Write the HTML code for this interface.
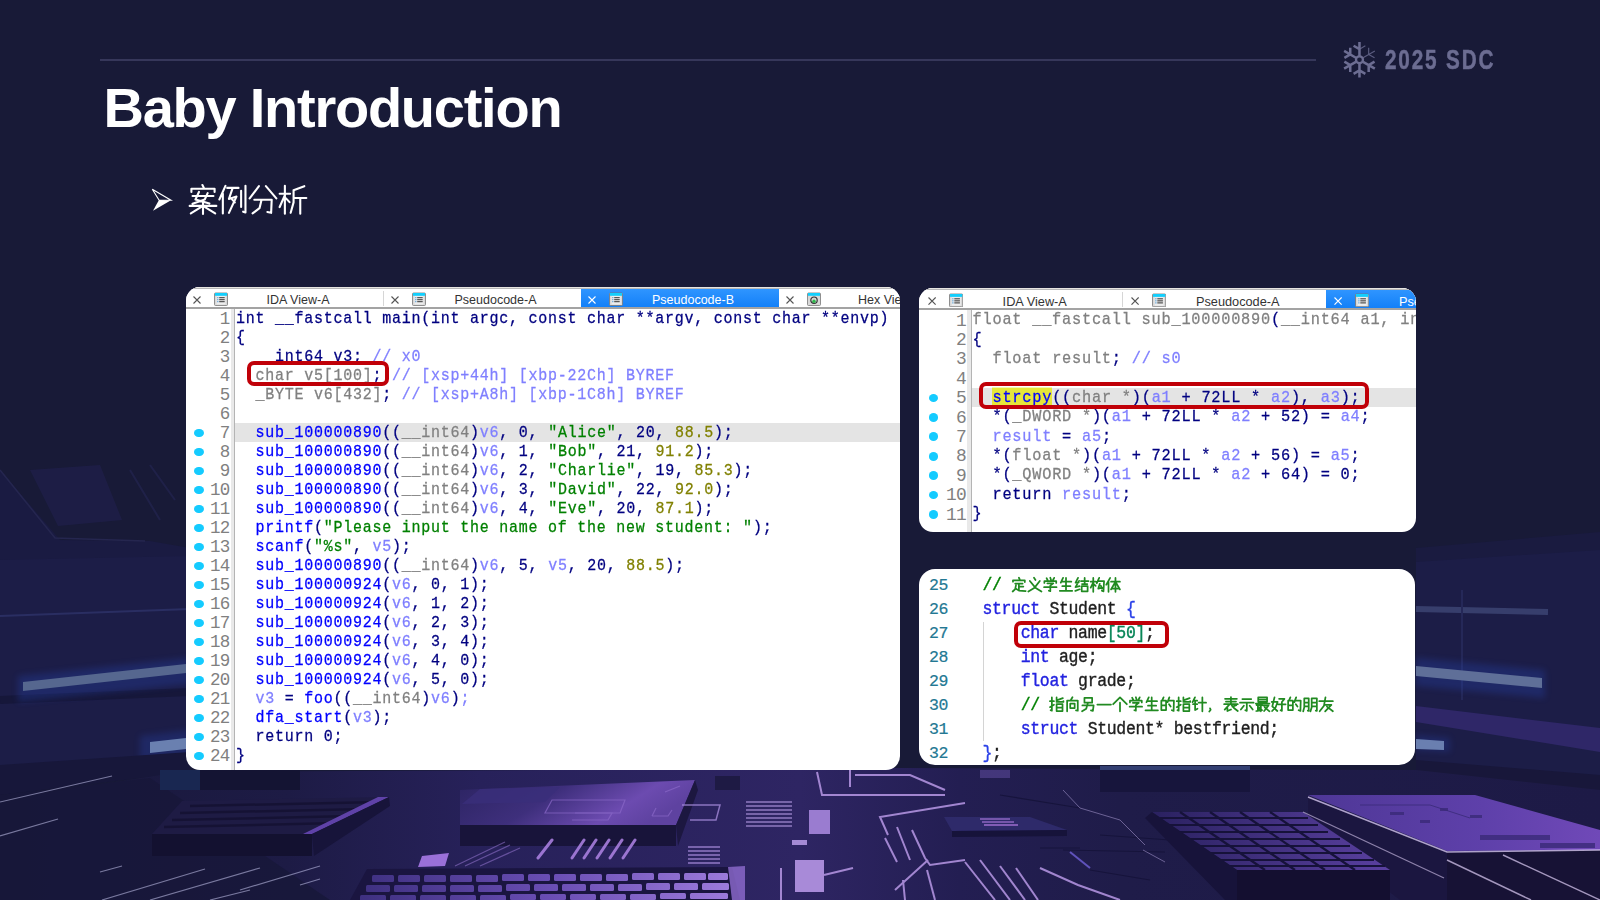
<!DOCTYPE html>
<html><head><meta charset="utf-8"><style>
html,body{margin:0;padding:0;}
body{width:1600px;height:900px;overflow:hidden;position:relative;background:#181a37;font-family:"Liberation Sans",sans-serif;}
#bg{position:absolute;left:0;top:0;width:1600px;height:900px;}
#bg svg{display:block}
.panel svg{display:block}
.hline{position:absolute;left:100px;top:59px;width:1216px;height:2px;background:#36375a;}
.title{position:absolute;left:103.5px;top:73px;font-size:56px;font-weight:bold;color:#fff;letter-spacing:-1.25px;white-space:nowrap;line-height:70px;}
.logo{position:absolute;left:1385px;top:45px;color:#6c6d92;-webkit-text-stroke:0.5px #6c6d92;font-weight:bold;font-size:28px;line-height:30px;letter-spacing:2.5px;white-space:nowrap;transform-origin:0 0;transform:scaleX(0.74);}
.panel{position:absolute;background:#fff;border-radius:14px;overflow:hidden;}
.ida .tabbar{position:absolute;left:0;top:0;right:0;background:#fff;border-top:1.2px solid #e6e4e0;box-shadow:inset 0 1px 0 #b8b8b8;box-sizing:border-box;}
.ida .tab{position:absolute;top:2px;}
.ida .tab.act{background:linear-gradient(#2f95ff,#1380f8);}
.ida .tab .tx,.ida .tab .ic{position:absolute;}
.ida .tab .tl{position:absolute;width:120px;text-align:center;color:#333;line-height:19px;white-space:nowrap;}
.ida .tab.act .tl{color:#fff;}
.ida .sep{position:absolute;width:1px;background:#d6d6d6;}
.ida .tabline{position:absolute;left:0;right:0;background:#a3a3a3;}
.ida .gbar{position:absolute;background:#e9e9e9;border-right:1px solid #b4b4b4;box-sizing:border-box;}
.ida .hl{position:absolute;background:#e4e4e4;}
.ida .ln{position:absolute;left:0;text-align:right;color:#808080;font-family:"Liberation Mono",monospace;}
.ida .dot{position:absolute;background:#14cbff;border-radius:50%;}
.ida .code{position:absolute;white-space:pre;font-family:"Liberation Mono",monospace;color:#000080;transform:scaleY(1.1);transform-origin:0 14px;-webkit-text-stroke:0.25px currentColor;}
.ida .red{position:absolute;border:4.5px solid #c00008;border-radius:7px;box-sizing:border-box;}
.n{color:#000080}.b{color:#0000ff}.g{color:#808080}.v{color:#7f7fff}.s{color:#008000}.o{color:#808000}
.y{color:#0000ff;background:#e6e63a}
.vs .vln{position:absolute;left:0;width:29px;-webkit-text-stroke:0.2px currentColor;text-align:right;font-family:"Liberation Mono",monospace;font-size:16.5px;line-height:24px;color:#237893;letter-spacing:-0.34px}
.vs .vcode{position:absolute;left:63.5px;white-space:pre;font-family:"Liberation Mono",monospace;font-size:16.5px;line-height:24px;color:#1f1f1f;letter-spacing:-0.34px;-webkit-text-stroke:0.35px currentColor;transform:scaleY(1.06);transform-origin:0 16.3px}
.vs .guide{position:absolute;width:1px;background:#d4d4d4}
.vs .red{position:absolute;border:4px solid #c00008;border-radius:7px;box-sizing:border-box;}
.k{color:#2323e0}.i{color:#1f1f1f}.t{color:#098658}.c{color:#008000}.p{color:#2a40e8}
.snow{position:absolute;left:1342px;top:41px;}
.arrow{position:absolute;left:150px;top:186px;}
.subcjk{position:absolute;left:187px;top:180px;}

</style></head><body>
<div id="bg"><svg width="1600" height="900" viewBox="0 0 1600 900">
<defs>
<linearGradient id="floor" x1="0" y1="0" x2="1" y2="0">
<stop offset="0" stop-color="#18183a"/><stop offset="0.18" stop-color="#1d1b45"/><stop offset="0.3" stop-color="#27215a"/><stop offset="0.5" stop-color="#2e2563"/><stop offset="0.6" stop-color="#231e52"/><stop offset="0.7" stop-color="#1f1c49"/><stop offset="1" stop-color="#1d1a46"/>
</linearGradient>
<linearGradient id="slabtop" x1="0" y1="0" x2="1" y2="0.3">
<stop offset="0" stop-color="#2c2462"/><stop offset="0.45" stop-color="#3e2f7c"/><stop offset="0.8" stop-color="#6c4bb0"/><stop offset="1" stop-color="#5e42a0"/>
</linearGradient>
<linearGradient id="rslab" x1="0" y1="0" x2="1" y2="0">
<stop offset="0" stop-color="#4e3796"/><stop offset="0.6" stop-color="#5e40aa"/><stop offset="1" stop-color="#7049b8"/>
</linearGradient>
<linearGradient id="keys" gradientUnits="userSpaceOnUse" x1="360" y1="0" x2="745" y2="0">
<stop offset="0" stop-color="#3e3080"/><stop offset="0.5" stop-color="#6a4eb4"/><stop offset="1" stop-color="#a07ede"/>
</linearGradient>
<linearGradient id="rkeys" x1="0" y1="0" x2="1" y2="0">
<stop offset="0" stop-color="#2a2160"/><stop offset="1" stop-color="#5a40a0"/>
</linearGradient>
<filter id="blur3" x="-20%" y="-100%" width="140%" height="300%"><feGaussianBlur stdDeviation="3"/></filter>
<filter id="blur1"><feGaussianBlur stdDeviation="0.6"/></filter>
</defs>
<rect width="1600" height="900" fill="#181a37"/>
<!-- LEFT side structures -->
<polygon points="0,555 190,548 190,770 0,790" fill="#1c1d47"/>
<polygon points="0,470 60,540 150,541 190,548 190,556 0,560" fill="#1a1b42"/>
<path d="M0 470 L55 538 L145 541" stroke="#25264f" stroke-width="1.5" fill="none"/>
<polygon points="30,470 100,465 122,520 58,526" fill="#1f1f4b" opacity="0.7"/>
<path d="M130 470 L160 520 M150 465 L175 500" stroke="#232450" stroke-width="2" opacity="0.7"/>
<path d="M0 616 L190 609" stroke="#2a2e62" stroke-width="2"/>
<path d="M0 700 L190 692" stroke="#16173a" stroke-width="8"/>
<polygon points="18,676 190,658 190,684 18,702" fill="#2845b0" opacity="0.3" filter="url(#blur3)"/>
<polygon points="23,682 186,664 186,673 23,691" fill="#56678f"/>
<polygon points="140,736 190,730 190,756 140,760" fill="#2845b0" opacity="0.28" filter="url(#blur3)"/>
<polygon points="150,742 186,738 186,749 150,753" fill="#6a80b0"/>
<polygon points="0,765 190,752 190,772 0,795" fill="#17173a"/>
<!-- RIGHT side structures -->
<polygon points="1416,560 1600,548 1600,790 1416,780" fill="#1c1d47"/>
<polygon points="1416,548 1600,532 1600,550 1416,562" fill="#1a1b40"/>
<path d="M1416 609 L1548 612" stroke="#373e6c" stroke-width="6"/>
<path d="M1462 590 L1462 700" stroke="#252858" stroke-width="2"/>
<polygon points="1416,658 1545,670 1545,698 1416,686" fill="#2845b0" opacity="0.3" filter="url(#blur3)"/>
<polygon points="1416,666 1542,678 1542,688 1416,676" fill="#5f6f98"/>
<polygon points="1416,706 1600,728 1600,752 1416,722" fill="#2f2768"/>
<polygon points="1416,735 1450,738 1450,752 1416,750" fill="#2845b0" opacity="0.28" filter="url(#blur3)"/>
<polygon points="1416,739 1444,741 1444,750 1416,749" fill="#6a7fb0"/>
<polygon points="1416,760 1600,775 1600,800 1416,785" fill="#18173a"/>
<!-- FLOOR -->
<polygon points="0,800 180,772 900,768 1416,770 1600,790 1600,900 0,900" fill="url(#floor)"/>
<!-- left bottom dark -->
<polygon points="0,795 150,778 330,900 0,900" fill="#17173a" opacity="0.85"/>
<g stroke="#c8c8f0" stroke-width="1.2" fill="none" opacity="0.55">
<path d="M0 802 L112 776"/><path d="M0 836 L58 819"/><path d="M100 872 L122 866"/><path d="M102 900 L205 869"/><path d="M150 900 L260 868"/><path d="M210 900 L250 890"/><path d="M240 890 L320 866"/><path d="M300 885 L320 879"/>
</g>
<!-- dark slab under left panel -->
<polygon points="160,770 300,770 300,790 160,790" fill="#141433"/>
<polygon points="160,770 200,770 200,790 160,790" fill="#1e3a70" opacity="0.5"/>
<!-- left keyboard -->
<polygon points="182,801 389,797 312,834 152,834" fill="#1e1b44"/>
<g fill="#151233" opacity="0.9">
<path d="M190 806 L380 802" stroke="#151233" stroke-width="2.5"/><path d="M180 813 L366 809" stroke="#151233" stroke-width="2.5"/><path d="M172 820 L352 816" stroke="#151233" stroke-width="2.5"/><path d="M164 827 L338 823" stroke="#151233" stroke-width="2.5"/>
</g>
<polygon points="378,797 389,797 312,834 303,834" fill="#5f42a8"/>
<polygon points="152,834 312,834 312,856 152,856" fill="#131130"/>
<polygon points="312,834 389,797 390,806 314,856" fill="#17143a"/>
<!-- middle slab -->
<polygon points="460,790 695,780 676,825 460,825" fill="url(#slabtop)"/>
<polygon points="480,789 560,787 545,802 462,804" fill="#3a2e7a" opacity="0.8"/>
<polygon points="460,825 676,825 676,846 460,846" fill="#18143a"/>
<polygon points="676,825 695,780 698,790 678,846" fill="#1c1740"/>
<g stroke="#8a68c8" stroke-width="1.2" fill="none" opacity="0.7">
<path d="M552 800 L625 800 L620 813 L545 813 Z"/><path d="M575 813 L612 813 L608 820 L572 820"/><path d="M665 792 L680 786"/><path d="M652 816 L656 808 M652 816 L668 816 L672 810"/>
</g>
<!-- slash marks -->
<g stroke="#a87ede" stroke-width="3" opacity="0.9" stroke-linecap="round">
<path d="M538 858 L552 840"/><path d="M572 858 L584 840"/><path d="M584 858 L596 840"/><path d="M597 858 L609 840"/><path d="M610 858 L622 840"/><path d="M623 858 L635 840"/>
</g>
<polygon points="422,856 449,853 445,866 418,867" fill="#9a70d8"/>
<g stroke="#8e70c8" stroke-width="1.2" opacity="0.6"><path d="M455 866 L505 842"/><path d="M465 866 L510 845"/><path d="M480 866 L520 848"/></g>
<g stroke="#a488d8" stroke-width="1.6" opacity="0.8">
<path d="M688 847 L720 847"/><path d="M688 851 L720 851"/><path d="M688 855 L720 855"/><path d="M688 859 L720 859"/><path d="M688 863 L720 863"/>
</g>
<path d="M682 805 L720 805 L716 820 L690 820" stroke="#a488d8" stroke-width="1.5" fill="none" opacity="0.8"/>
<polygon points="715,776 740,776 740,790 715,790" fill="#1e1a44"/>
<!-- middle keyboard -->
<polygon points="367,869 732,867 740,900 350,900" fill="#1a1540"/>
<g fill="url(#keys)">
<rect x="372" y="875" width="22" height="7" rx="1.5"/><rect x="398" y="875" width="22" height="7" rx="1.5"/><rect x="424" y="875" width="22" height="7" rx="1.5"/><rect x="450" y="875" width="22" height="7" rx="1.5"/><rect x="476" y="875" width="22" height="7" rx="1.5"/><rect x="502" y="874" width="22" height="7" rx="1.5"/><rect x="528" y="874" width="22" height="7" rx="1.5"/><rect x="554" y="874" width="22" height="7" rx="1.5"/><rect x="580" y="874" width="22" height="7" rx="1.5"/><rect x="606" y="874" width="22" height="7" rx="1.5"/><rect x="632" y="873" width="22" height="7" rx="1.5"/><rect x="658" y="873" width="22" height="7" rx="1.5"/><rect x="684" y="873" width="22" height="7" rx="1.5"/><rect x="708" y="873" width="20" height="7" rx="1.5"/>
<rect x="366" y="885" width="24" height="7" rx="1.5"/><rect x="394" y="885" width="24" height="7" rx="1.5"/><rect x="422" y="885" width="24" height="7" rx="1.5"/><rect x="450" y="885" width="24" height="7" rx="1.5"/><rect x="478" y="885" width="24" height="7" rx="1.5"/><rect x="506" y="884" width="24" height="7" rx="1.5"/><rect x="534" y="884" width="24" height="7" rx="1.5"/><rect x="562" y="884" width="24" height="7" rx="1.5"/><rect x="590" y="884" width="24" height="7" rx="1.5"/><rect x="618" y="884" width="24" height="7" rx="1.5"/><rect x="646" y="883" width="24" height="7" rx="1.5"/><rect x="674" y="883" width="24" height="7" rx="1.5"/><rect x="702" y="883" width="27" height="7" rx="1.5"/>
<rect x="360" y="895" width="26" height="6" rx="1.5"/><rect x="390" y="895" width="26" height="6" rx="1.5"/><rect x="420" y="895" width="26" height="6" rx="1.5"/><rect x="450" y="895" width="26" height="6" rx="1.5"/><rect x="480" y="895" width="26" height="6" rx="1.5"/><rect x="510" y="894" width="26" height="6" rx="1.5"/><rect x="540" y="894" width="26" height="6" rx="1.5"/><rect x="570" y="894" width="26" height="6" rx="1.5"/><rect x="600" y="894" width="26" height="6" rx="1.5"/><rect x="630" y="894" width="26" height="6" rx="1.5"/><rect x="660" y="893" width="26" height="6" rx="1.5"/><rect x="690" y="893" width="38" height="6" rx="1.5"/>
</g>
<polygon points="728,867 745,866 745,900 732,900" fill="#8e6cd0" opacity="0.8"/>
<!-- circuit area 740-960 -->
<g stroke="#a890d8" stroke-width="1.6" opacity="0.8">
<path d="M746 802 L792 802"/><path d="M746 806 L792 806"/><path d="M746 810 L792 810"/><path d="M746 814 L792 814"/><path d="M746 818 L792 818"/><path d="M746 822 L792 822"/><path d="M746 826 L792 826"/>
</g>
<rect x="809" y="810" width="21" height="24" fill="#9a7cd0"/>
<rect x="792" y="840" width="15" height="5" fill="#a48ad4"/>
<rect x="795" y="860" width="29" height="32" fill="#a88ad8"/>
<g fill="none" stroke="#b898e6" stroke-width="2" opacity="0.85">
<path d="M781 868 L781 900"/><path d="M824 875 L853 868"/>
<path d="M817 772 L822 795 L945 795"/><path d="M850 770 L850 787"/><path d="M855 775 L910 775 L945 790"/>
<path d="M965 803 L880 817 L888 835"/><path d="M885 838 L897 862"/><path d="M897 827 L910 860"/><path d="M912 830 L925 858 L930 865 L965 860"/>
<path d="M927 870 L935 900"/><path d="M903 880 L905 900"/><path d="M928 860 L895 890"/>
<path d="M965 862 L995 900"/><path d="M980 860 L1010 900"/><path d="M1000 866 L1025 900"/><path d="M1016 868 L1038 900"/><path d="M1040 868 L1078 885 L1120 900"/>
</g>
<polygon points="944,817 1030,817 1067,830 952,831" fill="#2e2a6a"/><polygon points="952,831 1067,830 1067,836 952,837" fill="#16133a"/>
<g stroke="#b07ae0" stroke-width="1.3" opacity="0.85"><path d="M980 819 L1010 819"/><path d="M982 822 L1014 822"/><path d="M984 825 L1018 825"/></g>
<g stroke="#141238" stroke-width="1.2" fill="none" opacity="0.8"><path d="M1000 795 L1080 808"/><path d="M1063 850 L1165 852"/><path d="M1040 848 L1080 848"/><path d="M1090 870 L1150 880"/><path d="M1100 835 L1170 840"/></g>
<g stroke="#b8a8e0" stroke-width="1" fill="none" opacity="0.5"><path d="M1063 790 L1080 808 L1120 820 L1145 845"/><path d="M1143 850 L1165 862"/></g>
<polygon points="980,770 1010,770 1010,778 980,778" fill="#5a4898" opacity="0.6"/>
<path d="M1070 852 L1090 868" stroke="#7060d8" stroke-width="2" opacity="0.8"/>
<!-- dark slab behind right keyboard -->
<polygon points="1100,766 1250,766 1250,792 1100,792" fill="#17153c"/>
<polygon points="1100,766 1250,766 1250,770 1100,770" fill="#3b4a80" opacity="0.8"/>
<!-- right purple slab -->
<polygon points="1308,795 1475,795 1600,830 1600,850 1447,851" fill="url(#rslab)"/>
<polygon points="1308,797 1447,852 1447,900 1400,900 1308,830" fill="#1b1640"/>
<polygon points="1447,852 1600,850 1600,900 1447,900" fill="#171235"/>
<path d="M1308 797 L1447 852 L1600 850" stroke="#e0d0f8" stroke-width="1.4" fill="none" opacity="0.75"/>
<path d="M1447 860 L1531 900" stroke="#e0d0f8" stroke-width="1.4" opacity="0.7"/>
<path d="M1503 855 L1600 900" stroke="#e0d0f8" stroke-width="1.4" opacity="0.7"/>
<g fill="#3a2a78" opacity="0.8"><rect x="1480" y="835" width="70" height="5"/><rect x="1540" y="843" width="55" height="5"/><rect x="1390" y="812" width="14" height="3"/><rect x="1420" y="820" width="10" height="3"/><rect x="1440" y="808" width="8" height="3"/><rect x="1470" y="815" width="12" height="3"/></g>
<path d="M1360 805 L1430 805 L1470 818" stroke="#3a2a78" stroke-width="1" fill="none" opacity="0.8"/>
<!-- right keyboard -->
<polygon points="1152,812 1303,812 1390,870 1237,870" fill="url(#rkeys)"/>
<g stroke="#16123a" stroke-width="2.2">
<path d="M1160 818 L1308 818"/><path d="M1168 825 L1318 825"/><path d="M1178 832 L1328 832"/><path d="M1188 839 L1340 839"/><path d="M1198 846 L1350 846"/><path d="M1208 853 L1362 853"/><path d="M1218 860 L1374 860"/><path d="M1228 866 L1385 866"/>
<path d="M1180 812 L1265 870"/><path d="M1210 812 L1295 870"/><path d="M1240 812 L1325 870"/><path d="M1270 812 L1355 870"/>
</g>
<polygon points="1152,812 1237,870 1237,900 1225,900 1145,818" fill="#17133a"/>
<polygon points="1237,870 1390,870 1390,900 1237,900" fill="#140f30"/>
<path d="M1303 812 L1444 878" stroke="#d8c8f0" stroke-width="1.3" opacity="0.6"/>
</svg>
</div>
<div class="hline"></div>
<div class="title">Baby Introduction</div>
<div class="logo">2025 SDC</div>
<svg class="snow" width="36" height="38" viewBox="0 0 34 36"><path d="M16.50 14.40L16.50 1.00 M16.50 7.72L10.93 4.52 M13.56 16.10L1.95 9.40 M7.77 12.76L7.78 6.34 M7.77 12.76L2.22 15.98 M13.56 19.50L1.95 26.20 M7.77 22.84L2.22 19.62 M7.77 22.84L7.78 29.26 M16.50 21.20L16.50 34.60 M16.50 27.88L10.93 31.08 M16.50 27.88L22.07 31.08 M19.44 19.50L31.05 26.20 M25.23 22.84L25.22 29.26 M25.23 22.84L30.78 19.62" stroke="#6c6d92" stroke-width="2.4" fill="none"/><path d="M16.50 7.72L22.07 4.52 M19.44 16.10L31.05 9.40 M25.23 12.76L30.78 15.98 M25.23 12.76L25.22 6.34" stroke="#6c6d92" stroke-width="1.1" fill="none" opacity="0.8"/><circle cx="16.5" cy="17.8" r="3.3" fill="none" stroke="#6c6d92" stroke-width="2.2"/></svg>
<svg class="arrow" width="24" height="26" viewBox="0 0 24 26"><path d="M2.3 3.2 L21 14.2 L9 14 Z" fill="none" stroke="#fff" stroke-width="1.1" stroke-linejoin="miter"/><path d="M9 14 L21 14.2 L3 24.7 Z" fill="#fff"/></svg>
<svg class="subcjk" width="130" height="40" viewBox="0 0 130 40"><path d="M15.42 5.00 L16.87 7.90 M4.40 11.96 L4.40 8.77 L27.60 8.77 L27.60 11.96 M11.94 11.96 L8.46 19.50 L22.38 23.56 M5.56 16.02 L26.44 16.02 M20.64 13.12 L17.74 19.50 L5.56 23.85 M2.66 25.88 L29.34 25.88 M16.00 21.82 L16.00 34.00 M16.00 25.88 L3.82 33.42 M16.00 25.88 L28.18 33.42 M38.46 5.87 L32.37 19.50 M35.85 13.70 L35.85 33.42 M40.20 7.90 L51.51 7.90 M45.71 7.90 L41.94 18.92 L49.48 16.60 L41.94 32.84 M44.26 18.34 L47.74 22.40 M54.12 10.80 L54.12 27.04 M58.47 5.87 L58.47 32.55 L56.15 31.68 M71.94 6.16 L62.66 18.34 M78.90 6.16 L89.34 18.34 M67.30 19.79 L84.70 19.79 L84.12 32.84 L80.35 31.97 M74.55 19.79 L72.52 28.20 L65.56 33.42 M92.66 13.70 L103.10 13.70 M97.88 5.87 L97.88 33.71 M97.88 15.15 L92.66 27.04 M99.04 18.34 L102.52 22.11 M117.31 6.16 L106.58 10.22 M106.58 10.22 L106.58 22.40 L103.68 32.84 M106.58 18.05 L119.34 18.05 M113.25 18.05 L113.25 33.71" fill="none" stroke="#fff" stroke-width="2.1" stroke-linecap="round" stroke-linejoin="round"/></svg>
<div class="panel ida" style="left:186px;top:287px;width:714px;height:483px;">
<div class="tabbar" style="height:20px"></div>
<div class="tab" style="left:0px;width:197.5px;height:18px;">
<div class="tx" style="left:7.2px;top:6.8px;width:8px;height:8px"><svg width="100%" height="100%" viewBox="0 0 8 8"><path d="M0.5 0.5L7.5 7.5M7.5 0.5L0.5 7.5" stroke="#555" stroke-width="1.1" fill="none"/></svg></div>
<div class="ic" style="left:28px;top:2.5px;width:14px;height:14px"><svg width="100%" height="100%" viewBox="0 0 14 14"><rect x="0.5" y="1" width="13" height="12.5" rx="1" fill="#d8d8d8" stroke="#777" stroke-width="0.8"/><rect x="1" y="1" width="12" height="2.8" fill="#12cffd"/><rect x="2.5" y="4" width="9" height="8.5" fill="#eee"/><rect x="3.2" y="5.2" width="1.2" height="1" fill="#3a8fd0"/><rect x="3.2" y="7.2" width="1.2" height="1" fill="#3a8fd0"/><rect x="3.2" y="9.2" width="1.2" height="1" fill="#3a8fd0"/><rect x="5.2" y="5.2" width="5.5" height="1" fill="#333"/><rect x="5.2" y="7.2" width="5.5" height="1" fill="#333"/><rect x="5.2" y="9.2" width="5.5" height="1" fill="#333"/></svg></div>
<div class="tl" style="left:52px;top:1.7px;font-size:12.5px;">IDA View-A</div>
<div class="sep" style="left:196.5px;height:15px;top:2px"></div>
</div>
<div class="tab" style="left:197.5px;width:197.5px;height:18px;">
<div class="tx" style="left:7.2px;top:6.8px;width:8px;height:8px"><svg width="100%" height="100%" viewBox="0 0 8 8"><path d="M0.5 0.5L7.5 7.5M7.5 0.5L0.5 7.5" stroke="#555" stroke-width="1.1" fill="none"/></svg></div>
<div class="ic" style="left:28px;top:2.5px;width:14px;height:14px"><svg width="100%" height="100%" viewBox="0 0 14 14"><rect x="0.5" y="1" width="13" height="12.5" rx="1" fill="#d8d8d8" stroke="#777" stroke-width="0.8"/><rect x="1" y="1" width="12" height="2.8" fill="#12cffd"/><rect x="2.5" y="4" width="9" height="8.5" fill="#eee"/><rect x="3.2" y="5.2" width="1.2" height="1" fill="#3a8fd0"/><rect x="3.2" y="7.2" width="1.2" height="1" fill="#3a8fd0"/><rect x="3.2" y="9.2" width="1.2" height="1" fill="#3a8fd0"/><rect x="5.2" y="5.2" width="5.5" height="1" fill="#333"/><rect x="5.2" y="7.2" width="5.5" height="1" fill="#333"/><rect x="5.2" y="9.2" width="5.5" height="1" fill="#333"/></svg></div>
<div class="tl" style="left:52px;top:1.7px;font-size:12.5px;">Pseudocode-A</div>
</div>
<div class="tab act" style="left:395px;width:197.5px;height:18px;">
<div class="tx" style="left:7.2px;top:6.8px;width:8px;height:8px"><svg width="100%" height="100%" viewBox="0 0 8 8"><path d="M0.5 0.5L7.5 7.5M7.5 0.5L0.5 7.5" stroke="#fff" stroke-width="1.1" fill="none"/></svg></div>
<div class="ic" style="left:28px;top:2.5px;width:14px;height:14px"><svg width="100%" height="100%" viewBox="0 0 14 14"><rect x="0.5" y="1" width="13" height="12.5" rx="1" fill="#d8d8d8" stroke="#777" stroke-width="0.8"/><rect x="1" y="1" width="12" height="2.8" fill="#12cffd"/><rect x="2.5" y="4" width="9" height="8.5" fill="#eee"/><rect x="3.2" y="5.2" width="1.2" height="1" fill="#3a8fd0"/><rect x="3.2" y="7.2" width="1.2" height="1" fill="#3a8fd0"/><rect x="3.2" y="9.2" width="1.2" height="1" fill="#3a8fd0"/><rect x="5.2" y="5.2" width="5.5" height="1" fill="#333"/><rect x="5.2" y="7.2" width="5.5" height="1" fill="#333"/><rect x="5.2" y="9.2" width="5.5" height="1" fill="#333"/></svg></div>
<div class="tl" style="left:52px;top:1.7px;font-size:12.5px;">Pseudocode-B</div>
</div>
<div class="tab" style="left:592.5px;width:197.5px;height:18px;">
<div class="tx" style="left:7.2px;top:6.8px;width:8px;height:8px"><svg width="100%" height="100%" viewBox="0 0 8 8"><path d="M0.5 0.5L7.5 7.5M7.5 0.5L0.5 7.5" stroke="#555" stroke-width="1.1" fill="none"/></svg></div>
<div class="ic" style="left:28px;top:2.5px;width:14px;height:14px"><svg width="100%" height="100%" viewBox="0 0 14 14"><rect x="0.5" y="1" width="13" height="12.5" rx="1" fill="#d8d8d8" stroke="#777" stroke-width="0.8"/><rect x="1" y="1" width="12" height="2.8" fill="#12cffd"/><circle cx="7" cy="8.2" r="3.2" fill="none" stroke="#333" stroke-width="1.2"/><circle cx="7" cy="9.3" r="1.7" fill="#2db84a"/></svg></div>
<div class="tl" style="left:52px;top:1.7px;font-size:12.5px;">Hex View-A</div>
</div>
<div class="tabline" style="top:20px;height:2px"></div>
<div class="gbar" style="left:45px;top:22px;width:4px;bottom:0"></div>
<div class="hl" style="left:49px;right:0;top:136px;height:19px"></div>
<div class="ln" style="top:23.2px;height:19px;line-height:19px;font-size:17.5px;width:43.5px;letter-spacing:-0.75px">1</div>
<div class="code" style="left:50px;top:22.7px;height:19px;line-height:19px;font-size:15px;letter-spacing:0.75px"><span class="n">int __fastcall main(int argc, const char **argv, const char **envp)</span></div>
<div class="ln" style="top:42.2px;height:19px;line-height:19px;font-size:17.5px;width:43.5px;letter-spacing:-0.75px">2</div>
<div class="code" style="left:50px;top:41.7px;height:19px;line-height:19px;font-size:15px;letter-spacing:0.75px"><span class="n">{</span></div>
<div class="ln" style="top:61.2px;height:19px;line-height:19px;font-size:17.5px;width:43.5px;letter-spacing:-0.75px">3</div>
<div class="code" style="left:50px;top:60.7px;height:19px;line-height:19px;font-size:15px;letter-spacing:0.75px"><span class="n">  __int64 v3; </span><span class="v">// x0</span></div>
<div class="ln" style="top:80.2px;height:19px;line-height:19px;font-size:17.5px;width:43.5px;letter-spacing:-0.75px">4</div>
<div class="code" style="left:50px;top:79.7px;height:19px;line-height:19px;font-size:15px;letter-spacing:0.75px"><span class="n">  </span><span class="g">char v5[100]</span><span class="n">; </span><span class="v">// [xsp+44h] [xbp-22Ch] BYREF</span></div>
<div class="ln" style="top:99.2px;height:19px;line-height:19px;font-size:17.5px;width:43.5px;letter-spacing:-0.75px">5</div>
<div class="code" style="left:50px;top:98.7px;height:19px;line-height:19px;font-size:15px;letter-spacing:0.75px"><span class="n">  </span><span class="g">_BYTE v6[432]</span><span class="n">; </span><span class="v">// [xsp+A8h] [xbp-1C8h] BYREF</span></div>
<div class="ln" style="top:118.2px;height:19px;line-height:19px;font-size:17.5px;width:43.5px;letter-spacing:-0.75px">6</div>
<div class="code" style="left:50px;top:117.7px;height:19px;line-height:19px;font-size:15px;letter-spacing:0.75px"><span class="n"></span></div>
<div class="ln" style="top:137.2px;height:19px;line-height:19px;font-size:17.5px;width:43.5px;letter-spacing:-0.75px">7</div>
<div class="dot" style="left:8px;top:141.5px;width:9.5px;height:8.5px"></div>
<div class="code" style="left:50px;top:136.7px;height:19px;line-height:19px;font-size:15px;letter-spacing:0.75px"><span class="n">  </span><span class="b">sub_100000890</span><span class="n">((</span><span class="g">__int64</span><span class="n">)</span><span class="v">v6</span><span class="n">, 0, </span><span class="s">"Alice"</span><span class="n">, 20, </span><span class="o">88.5</span><span class="n">);</span></div>
<div class="ln" style="top:156.2px;height:19px;line-height:19px;font-size:17.5px;width:43.5px;letter-spacing:-0.75px">8</div>
<div class="dot" style="left:8px;top:160.5px;width:9.5px;height:8.5px"></div>
<div class="code" style="left:50px;top:155.7px;height:19px;line-height:19px;font-size:15px;letter-spacing:0.75px"><span class="n">  </span><span class="b">sub_100000890</span><span class="n">((</span><span class="g">__int64</span><span class="n">)</span><span class="v">v6</span><span class="n">, 1, </span><span class="s">"Bob"</span><span class="n">, 21, </span><span class="o">91.2</span><span class="n">);</span></div>
<div class="ln" style="top:175.2px;height:19px;line-height:19px;font-size:17.5px;width:43.5px;letter-spacing:-0.75px">9</div>
<div class="dot" style="left:8px;top:179.5px;width:9.5px;height:8.5px"></div>
<div class="code" style="left:50px;top:174.7px;height:19px;line-height:19px;font-size:15px;letter-spacing:0.75px"><span class="n">  </span><span class="b">sub_100000890</span><span class="n">((</span><span class="g">__int64</span><span class="n">)</span><span class="v">v6</span><span class="n">, 2, </span><span class="s">"Charlie"</span><span class="n">, 19, </span><span class="o">85.3</span><span class="n">);</span></div>
<div class="ln" style="top:194.2px;height:19px;line-height:19px;font-size:17.5px;width:43.5px;letter-spacing:-0.75px">10</div>
<div class="dot" style="left:8px;top:198.5px;width:9.5px;height:8.5px"></div>
<div class="code" style="left:50px;top:193.7px;height:19px;line-height:19px;font-size:15px;letter-spacing:0.75px"><span class="n">  </span><span class="b">sub_100000890</span><span class="n">((</span><span class="g">__int64</span><span class="n">)</span><span class="v">v6</span><span class="n">, 3, </span><span class="s">"David"</span><span class="n">, 22, </span><span class="o">92.0</span><span class="n">);</span></div>
<div class="ln" style="top:213.2px;height:19px;line-height:19px;font-size:17.5px;width:43.5px;letter-spacing:-0.75px">11</div>
<div class="dot" style="left:8px;top:217.5px;width:9.5px;height:8.5px"></div>
<div class="code" style="left:50px;top:212.7px;height:19px;line-height:19px;font-size:15px;letter-spacing:0.75px"><span class="n">  </span><span class="b">sub_100000890</span><span class="n">((</span><span class="g">__int64</span><span class="n">)</span><span class="v">v6</span><span class="n">, 4, </span><span class="s">"Eve"</span><span class="n">, 20, </span><span class="o">87.1</span><span class="n">);</span></div>
<div class="ln" style="top:232.2px;height:19px;line-height:19px;font-size:17.5px;width:43.5px;letter-spacing:-0.75px">12</div>
<div class="dot" style="left:8px;top:236.5px;width:9.5px;height:8.5px"></div>
<div class="code" style="left:50px;top:231.7px;height:19px;line-height:19px;font-size:15px;letter-spacing:0.75px"><span class="n">  </span><span class="b">printf</span><span class="n">(</span><span class="s">"Please input the name of the new student: "</span><span class="n">);</span></div>
<div class="ln" style="top:251.2px;height:19px;line-height:19px;font-size:17.5px;width:43.5px;letter-spacing:-0.75px">13</div>
<div class="dot" style="left:8px;top:255.5px;width:9.5px;height:8.5px"></div>
<div class="code" style="left:50px;top:250.7px;height:19px;line-height:19px;font-size:15px;letter-spacing:0.75px"><span class="n">  </span><span class="b">scanf</span><span class="n">(</span><span class="s">"%s"</span><span class="n">, </span><span class="v">v5</span><span class="n">);</span></div>
<div class="ln" style="top:270.2px;height:19px;line-height:19px;font-size:17.5px;width:43.5px;letter-spacing:-0.75px">14</div>
<div class="dot" style="left:8px;top:274.5px;width:9.5px;height:8.5px"></div>
<div class="code" style="left:50px;top:269.7px;height:19px;line-height:19px;font-size:15px;letter-spacing:0.75px"><span class="n">  </span><span class="b">sub_100000890</span><span class="n">((</span><span class="g">__int64</span><span class="n">)</span><span class="v">v6</span><span class="n">, 5, </span><span class="v">v5</span><span class="n">, 20, </span><span class="o">88.5</span><span class="n">);</span></div>
<div class="ln" style="top:289.2px;height:19px;line-height:19px;font-size:17.5px;width:43.5px;letter-spacing:-0.75px">15</div>
<div class="dot" style="left:8px;top:293.5px;width:9.5px;height:8.5px"></div>
<div class="code" style="left:50px;top:288.7px;height:19px;line-height:19px;font-size:15px;letter-spacing:0.75px"><span class="n">  </span><span class="b">sub_100000924</span><span class="n">(</span><span class="v">v6</span><span class="n">, 0, 1);</span></div>
<div class="ln" style="top:308.2px;height:19px;line-height:19px;font-size:17.5px;width:43.5px;letter-spacing:-0.75px">16</div>
<div class="dot" style="left:8px;top:312.5px;width:9.5px;height:8.5px"></div>
<div class="code" style="left:50px;top:307.7px;height:19px;line-height:19px;font-size:15px;letter-spacing:0.75px"><span class="n">  </span><span class="b">sub_100000924</span><span class="n">(</span><span class="v">v6</span><span class="n">, 1, 2);</span></div>
<div class="ln" style="top:327.2px;height:19px;line-height:19px;font-size:17.5px;width:43.5px;letter-spacing:-0.75px">17</div>
<div class="dot" style="left:8px;top:331.5px;width:9.5px;height:8.5px"></div>
<div class="code" style="left:50px;top:326.7px;height:19px;line-height:19px;font-size:15px;letter-spacing:0.75px"><span class="n">  </span><span class="b">sub_100000924</span><span class="n">(</span><span class="v">v6</span><span class="n">, 2, 3);</span></div>
<div class="ln" style="top:346.2px;height:19px;line-height:19px;font-size:17.5px;width:43.5px;letter-spacing:-0.75px">18</div>
<div class="dot" style="left:8px;top:350.5px;width:9.5px;height:8.5px"></div>
<div class="code" style="left:50px;top:345.7px;height:19px;line-height:19px;font-size:15px;letter-spacing:0.75px"><span class="n">  </span><span class="b">sub_100000924</span><span class="n">(</span><span class="v">v6</span><span class="n">, 3, 4);</span></div>
<div class="ln" style="top:365.2px;height:19px;line-height:19px;font-size:17.5px;width:43.5px;letter-spacing:-0.75px">19</div>
<div class="dot" style="left:8px;top:369.5px;width:9.5px;height:8.5px"></div>
<div class="code" style="left:50px;top:364.7px;height:19px;line-height:19px;font-size:15px;letter-spacing:0.75px"><span class="n">  </span><span class="b">sub_100000924</span><span class="n">(</span><span class="v">v6</span><span class="n">, 4, 0);</span></div>
<div class="ln" style="top:384.2px;height:19px;line-height:19px;font-size:17.5px;width:43.5px;letter-spacing:-0.75px">20</div>
<div class="dot" style="left:8px;top:388.5px;width:9.5px;height:8.5px"></div>
<div class="code" style="left:50px;top:383.7px;height:19px;line-height:19px;font-size:15px;letter-spacing:0.75px"><span class="n">  </span><span class="b">sub_100000924</span><span class="n">(</span><span class="v">v6</span><span class="n">, 5, 0);</span></div>
<div class="ln" style="top:403.2px;height:19px;line-height:19px;font-size:17.5px;width:43.5px;letter-spacing:-0.75px">21</div>
<div class="dot" style="left:8px;top:407.5px;width:9.5px;height:8.5px"></div>
<div class="code" style="left:50px;top:402.7px;height:19px;line-height:19px;font-size:15px;letter-spacing:0.75px"><span class="n">  </span><span class="v">v3</span><span class="n"> = </span><span class="b">foo</span><span class="n">((</span><span class="g">__int64</span><span class="n">)</span><span class="v">v6</span><span class="n">)</span><span class="v">;</span></div>
<div class="ln" style="top:422.2px;height:19px;line-height:19px;font-size:17.5px;width:43.5px;letter-spacing:-0.75px">22</div>
<div class="dot" style="left:8px;top:426.5px;width:9.5px;height:8.5px"></div>
<div class="code" style="left:50px;top:421.7px;height:19px;line-height:19px;font-size:15px;letter-spacing:0.75px"><span class="n">  </span><span class="b">dfa_start</span><span class="n">(</span><span class="v">v3</span><span class="n">);</span></div>
<div class="ln" style="top:441.2px;height:19px;line-height:19px;font-size:17.5px;width:43.5px;letter-spacing:-0.75px">23</div>
<div class="dot" style="left:8px;top:445.5px;width:9.5px;height:8.5px"></div>
<div class="code" style="left:50px;top:440.7px;height:19px;line-height:19px;font-size:15px;letter-spacing:0.75px"><span class="n">  return 0;</span></div>
<div class="ln" style="top:460.2px;height:19px;line-height:19px;font-size:17.5px;width:43.5px;letter-spacing:-0.75px">24</div>
<div class="dot" style="left:8px;top:464.5px;width:9.5px;height:8.5px"></div>
<div class="code" style="left:50px;top:459.7px;height:19px;line-height:19px;font-size:15px;letter-spacing:0.75px"><span class="n">}</span></div>
<div class="red" style="left:60.5px;top:73.5px;width:142px;height:25.5px"></div>
</div>
<div class="panel ida" style="left:919px;top:288px;width:497px;height:244px;">
<div class="tabbar" style="height:20.42px"></div>
<div class="tab" style="left:1.4px;width:203px;height:18.378px;">
<div class="tx" style="left:7.3512px;top:6.9428px;width:8.168px;height:8.168px"><svg width="100%" height="100%" viewBox="0 0 8 8"><path d="M0.5 0.5L7.5 7.5M7.5 0.5L0.5 7.5" stroke="#555" stroke-width="1.1" fill="none"/></svg></div>
<div class="ic" style="left:28.588px;top:2.5525px;width:14.294px;height:14.294px"><svg width="100%" height="100%" viewBox="0 0 14 14"><rect x="0.5" y="1" width="13" height="12.5" rx="1" fill="#d8d8d8" stroke="#777" stroke-width="0.8"/><rect x="1" y="1" width="12" height="2.8" fill="#12cffd"/><rect x="2.5" y="4" width="9" height="8.5" fill="#eee"/><rect x="3.2" y="5.2" width="1.2" height="1" fill="#3a8fd0"/><rect x="3.2" y="7.2" width="1.2" height="1" fill="#3a8fd0"/><rect x="3.2" y="9.2" width="1.2" height="1" fill="#3a8fd0"/><rect x="5.2" y="5.2" width="5.5" height="1" fill="#333"/><rect x="5.2" y="7.2" width="5.5" height="1" fill="#333"/><rect x="5.2" y="9.2" width="5.5" height="1" fill="#333"/></svg></div>
<div class="tl" style="left:54.352px;top:1.7357px;font-size:12.7625px;">IDA View-A</div>
<div class="sep" style="left:202px;height:15.315px;top:2.042px"></div>
</div>
<div class="tab" style="left:204.4px;width:203px;height:18.378px;">
<div class="tx" style="left:7.3512px;top:6.9428px;width:8.168px;height:8.168px"><svg width="100%" height="100%" viewBox="0 0 8 8"><path d="M0.5 0.5L7.5 7.5M7.5 0.5L0.5 7.5" stroke="#555" stroke-width="1.1" fill="none"/></svg></div>
<div class="ic" style="left:28.588px;top:2.5525px;width:14.294px;height:14.294px"><svg width="100%" height="100%" viewBox="0 0 14 14"><rect x="0.5" y="1" width="13" height="12.5" rx="1" fill="#d8d8d8" stroke="#777" stroke-width="0.8"/><rect x="1" y="1" width="12" height="2.8" fill="#12cffd"/><rect x="2.5" y="4" width="9" height="8.5" fill="#eee"/><rect x="3.2" y="5.2" width="1.2" height="1" fill="#3a8fd0"/><rect x="3.2" y="7.2" width="1.2" height="1" fill="#3a8fd0"/><rect x="3.2" y="9.2" width="1.2" height="1" fill="#3a8fd0"/><rect x="5.2" y="5.2" width="5.5" height="1" fill="#333"/><rect x="5.2" y="7.2" width="5.5" height="1" fill="#333"/><rect x="5.2" y="9.2" width="5.5" height="1" fill="#333"/></svg></div>
<div class="tl" style="left:54.352px;top:1.7357px;font-size:12.7625px;">Pseudocode-A</div>
</div>
<div class="tab act" style="left:407.4px;width:203px;height:18.378px;">
<div class="tx" style="left:7.3512px;top:6.9428px;width:8.168px;height:8.168px"><svg width="100%" height="100%" viewBox="0 0 8 8"><path d="M0.5 0.5L7.5 7.5M7.5 0.5L0.5 7.5" stroke="#fff" stroke-width="1.1" fill="none"/></svg></div>
<div class="ic" style="left:28.588px;top:2.5525px;width:14.294px;height:14.294px"><svg width="100%" height="100%" viewBox="0 0 14 14"><rect x="0.5" y="1" width="13" height="12.5" rx="1" fill="#d8d8d8" stroke="#777" stroke-width="0.8"/><rect x="1" y="1" width="12" height="2.8" fill="#12cffd"/><rect x="2.5" y="4" width="9" height="8.5" fill="#eee"/><rect x="3.2" y="5.2" width="1.2" height="1" fill="#3a8fd0"/><rect x="3.2" y="7.2" width="1.2" height="1" fill="#3a8fd0"/><rect x="3.2" y="9.2" width="1.2" height="1" fill="#3a8fd0"/><rect x="5.2" y="5.2" width="5.5" height="1" fill="#333"/><rect x="5.2" y="7.2" width="5.5" height="1" fill="#333"/><rect x="5.2" y="9.2" width="5.5" height="1" fill="#333"/></svg></div>
<div class="tl" style="left:54.352px;top:1.7357px;font-size:12.7625px;">Pseudocode-B</div>
</div>
<div class="tabline" style="top:20.42px;height:2px"></div>
<div class="gbar" style="left:48.445px;top:22.462px;width:4.084px;bottom:0"></div>
<div class="hl" style="left:52.529px;right:0;top:100.058px;height:19.399px"></div>
<div class="ln" style="top:23.6872px;height:19.399px;line-height:19.399px;font-size:17.8675px;width:46.9135px;letter-spacing:-0.76575px">1</div>
<div class="code" style="left:53.55px;top:23.162px;height:19.399px;line-height:19.399px;font-size:15.315px;letter-spacing:0.76575px"><span class="g">float __fastcall sub_100000890</span><span class="n">(</span><span class="g">__int64 a1, int a2, const char *a3, int a4, float a5)</span></div>
<div class="ln" style="top:43.0862px;height:19.399px;line-height:19.399px;font-size:17.8675px;width:46.9135px;letter-spacing:-0.76575px">2</div>
<div class="code" style="left:53.55px;top:42.561px;height:19.399px;line-height:19.399px;font-size:15.315px;letter-spacing:0.76575px"><span class="n">{</span></div>
<div class="ln" style="top:62.4852px;height:19.399px;line-height:19.399px;font-size:17.8675px;width:46.9135px;letter-spacing:-0.76575px">3</div>
<div class="code" style="left:53.55px;top:61.96px;height:19.399px;line-height:19.399px;font-size:15.315px;letter-spacing:0.76575px"><span class="n">  </span><span class="g">float result</span><span class="n">; </span><span class="v">// s0</span></div>
<div class="ln" style="top:81.8842px;height:19.399px;line-height:19.399px;font-size:17.8675px;width:46.9135px;letter-spacing:-0.76575px">4</div>
<div class="code" style="left:53.55px;top:81.359px;height:19.399px;line-height:19.399px;font-size:15.315px;letter-spacing:0.76575px"><span class="n"></span></div>
<div class="ln" style="top:101.283px;height:19.399px;line-height:19.399px;font-size:17.8675px;width:46.9135px;letter-spacing:-0.76575px">5</div>
<div class="dot" style="left:9.668px;top:105.673px;width:9.6995px;height:8.6785px"></div>
<div class="code" style="left:53.55px;top:100.758px;height:19.399px;line-height:19.399px;font-size:15.315px;letter-spacing:0.76575px"><span class="n">  </span><span class="y">strcpy</span><span class="n">((</span><span class="g">char *</span><span class="n">)(</span><span class="v">a1</span><span class="n"> + 72LL * </span><span class="v">a2</span><span class="n">), </span><span class="v">a3</span><span class="n">);</span></div>
<div class="ln" style="top:120.682px;height:19.399px;line-height:19.399px;font-size:17.8675px;width:46.9135px;letter-spacing:-0.76575px">6</div>
<div class="dot" style="left:9.668px;top:125.072px;width:9.6995px;height:8.6785px"></div>
<div class="code" style="left:53.55px;top:120.157px;height:19.399px;line-height:19.399px;font-size:15.315px;letter-spacing:0.76575px"><span class="n">  *(</span><span class="g">_DWORD *</span><span class="n">)(</span><span class="v">a1</span><span class="n"> + 72LL * </span><span class="v">a2</span><span class="n"> + 52) = </span><span class="v">a4</span><span class="n">;</span></div>
<div class="ln" style="top:140.081px;height:19.399px;line-height:19.399px;font-size:17.8675px;width:46.9135px;letter-spacing:-0.76575px">7</div>
<div class="dot" style="left:9.668px;top:144.471px;width:9.6995px;height:8.6785px"></div>
<div class="code" style="left:53.55px;top:139.556px;height:19.399px;line-height:19.399px;font-size:15.315px;letter-spacing:0.76575px"><span class="n">  </span><span class="v">result</span><span class="n"> = </span><span class="v">a5</span><span class="n">;</span></div>
<div class="ln" style="top:159.48px;height:19.399px;line-height:19.399px;font-size:17.8675px;width:46.9135px;letter-spacing:-0.76575px">8</div>
<div class="dot" style="left:9.668px;top:163.87px;width:9.6995px;height:8.6785px"></div>
<div class="code" style="left:53.55px;top:158.955px;height:19.399px;line-height:19.399px;font-size:15.315px;letter-spacing:0.76575px"><span class="n">  *(</span><span class="g">float *</span><span class="n">)(</span><span class="v">a1</span><span class="n"> + 72LL * </span><span class="v">a2</span><span class="n"> + 56) = </span><span class="v">a5</span><span class="n">;</span></div>
<div class="ln" style="top:178.879px;height:19.399px;line-height:19.399px;font-size:17.8675px;width:46.9135px;letter-spacing:-0.76575px">9</div>
<div class="dot" style="left:9.668px;top:183.269px;width:9.6995px;height:8.6785px"></div>
<div class="code" style="left:53.55px;top:178.354px;height:19.399px;line-height:19.399px;font-size:15.315px;letter-spacing:0.76575px"><span class="n">  *(</span><span class="g">_QWORD *</span><span class="n">)(</span><span class="v">a1</span><span class="n"> + 72LL * </span><span class="v">a2</span><span class="n"> + 64) = 0;</span></div>
<div class="ln" style="top:198.278px;height:19.399px;line-height:19.399px;font-size:17.8675px;width:46.9135px;letter-spacing:-0.76575px">10</div>
<div class="dot" style="left:9.668px;top:202.668px;width:9.6995px;height:8.6785px"></div>
<div class="code" style="left:53.55px;top:197.753px;height:19.399px;line-height:19.399px;font-size:15.315px;letter-spacing:0.76575px"><span class="n">  return </span><span class="v">result</span><span class="n">;</span></div>
<div class="ln" style="top:217.677px;height:19.399px;line-height:19.399px;font-size:17.8675px;width:46.9135px;letter-spacing:-0.76575px">11</div>
<div class="dot" style="left:9.668px;top:222.067px;width:9.6995px;height:8.6785px"></div>
<div class="code" style="left:53.55px;top:217.152px;height:19.399px;line-height:19.399px;font-size:15.315px;letter-spacing:0.76575px"><span class="n">}</span></div>
<div class="red" style="left:60px;top:94.3px;width:390px;height:26.4px"></div>
</div>
<div class="panel vs" style="left:919px;top:569px;width:496px;height:196px;border-radius:16px">
<div class="vln" style="top:4.91px">25</div>
<div class="vcode" style="top:4.91px"><span class="c">// </span></div>
<div class="vln" style="top:28.91px">26</div>
<div class="vcode" style="top:28.91px"><span class="k">struct</span><span class="i"> Student </span><span class="p">{</span></div>
<div class="vln" style="top:52.91px">27</div>
<div class="vcode" style="top:52.91px"><span class="i">    </span><span class="k">char</span><span class="i"> name</span><span class="t">[50]</span><span class="i">;</span></div>
<div class="vln" style="top:76.91px">28</div>
<div class="vcode" style="top:76.91px"><span class="i">    </span><span class="k">int</span><span class="i"> age;</span></div>
<div class="vln" style="top:100.91px">29</div>
<div class="vcode" style="top:100.91px"><span class="i">    </span><span class="k">float</span><span class="i"> grade;</span></div>
<div class="vln" style="top:124.91px">30</div>
<div class="vcode" style="top:124.91px"><span class="c">    // </span></div>
<div class="vln" style="top:148.91px">31</div>
<div class="vcode" style="top:148.91px"><span class="i">    </span><span class="k">struct</span><span class="i"> Student* bestfriend;</span></div>
<div class="vln" style="top:172.91px">32</div>
<div class="vcode" style="top:172.91px"><span class="p">}</span><span class="i">;</span></div>
<div class="guide" style="left:64px;top:53px;height:119px"></div>
<div class="red" style="left:95px;top:51.6px;width:155px;height:27px"></div>
<svg class="ov" width="496" height="196" style="position:absolute;left:0;top:0"><path d="M99.90 8.74 L100.64 10.22 M93.98 12.74 L93.98 11.26 L105.82 11.26 L105.82 13.04 M96.20 14.52 L103.60 14.52 M99.90 14.52 L99.90 21.03 M99.90 17.62 L104.34 17.62 M96.94 16.44 L96.20 20.14 L93.68 22.51 M96.64 19.55 L99.90 21.62 L106.71 22.06 M115.01 8.74 L116.49 10.96 M120.78 12.00 L115.60 18.66 L109.38 22.51 M110.86 12.00 L116.34 18.66 L122.41 22.51 M127.60 9.19 L128.64 11.26 M131.30 8.74 L132.04 10.96 M135.15 8.89 L133.96 11.26 M125.38 13.92 L125.38 12.15 L137.22 12.15 L137.22 13.92 M128.34 14.37 L134.26 14.37 L131.30 16.59 M131.30 16.59 L131.30 22.21 L129.82 21.77 M125.08 18.22 L137.52 18.22 M144.04 8.89 L141.82 13.63 M142.86 12.74 L152.33 12.74 M147.00 8.89 L147.00 21.62 M143.30 17.18 L151.44 17.18 M140.78 21.77 L153.22 21.77 M159.00 8.89 L156.63 13.63 L159.74 13.48 M160.04 11.85 L156.48 18.07 L160.63 17.18 M156.34 21.92 L160.63 20.29 M161.96 12.00 L169.51 12.00 M165.66 8.89 L165.66 15.11 M163.00 15.11 L168.32 15.11 M162.70 17.18 L168.62 17.18 L168.62 22.36 L162.70 22.36 L162.70 17.18 M171.74 12.74 L176.92 12.74 M174.26 8.89 L174.26 22.80 M174.26 13.48 L171.74 18.66 M174.85 15.11 L176.62 16.88 M180.18 8.89 L177.81 14.22 M178.70 12.00 L185.06 12.00 L184.47 22.36 L182.84 21.77 M180.77 14.81 L179.29 19.55 L183.14 18.66 M181.95 16.88 L182.84 19.55 M191.14 8.89 L187.29 15.70 M189.51 12.74 L189.51 22.80 M192.03 12.74 L200.91 12.74 M196.47 8.89 L196.47 22.80 M196.47 12.74 L192.03 20.44 M196.47 12.74 L200.91 20.44 M193.80 19.55 L199.13 19.55" fill="none" stroke="#218a21" stroke-width="1.75" stroke-linecap="round" stroke-linejoin="round"/><path d="M130.94 132.24 L134.94 132.24 M132.86 128.39 L132.86 141.71 L131.68 141.12 M130.94 138.16 L134.94 135.79 M137.60 128.39 L137.60 132.98 L144.41 132.98 L144.41 132.09 M143.82 129.13 L137.60 131.35 M137.60 135.20 L143.52 135.20 L143.52 142.01 L137.60 142.01 L137.60 135.20 M137.60 138.60 L143.52 138.60 M153.45 128.24 L151.97 130.76 M148.12 142.30 L148.12 131.50 L158.78 131.50 L158.78 141.71 L157.00 141.42 M151.23 134.61 L155.67 134.61 L155.67 139.05 L151.23 139.05 L151.23 134.61 M165.45 128.84 L173.15 128.84 L173.15 133.72 L165.45 133.72 L165.45 128.84 M163.38 136.38 L174.63 136.38 L173.89 141.86 L171.96 141.42 M168.71 134.61 L167.23 139.64 L163.08 142.30 M178.34 135.50 L191.96 135.50 M201.00 128.39 L194.19 135.20 M201.00 128.39 L207.81 135.20 M201.00 133.72 L201.00 142.30 M213.15 128.69 L214.19 130.76 M216.85 128.24 L217.59 130.46 M220.70 128.39 L219.51 130.76 M210.93 133.42 L210.93 131.65 L222.77 131.65 L222.77 133.42 M213.89 133.87 L219.81 133.87 L216.85 136.09 M216.85 136.09 L216.85 141.71 L215.37 141.27 M210.63 137.72 L223.07 137.72 M229.74 128.39 L227.52 133.13 M228.56 132.24 L238.03 132.24 M232.70 128.39 L232.70 141.12 M229.00 136.68 L237.14 136.68 M226.48 141.27 L238.92 141.27 M244.55 128.39 L243.37 131.06 M242.33 131.65 L247.07 131.65 L247.07 141.12 L242.33 141.12 L242.33 131.65 M242.33 136.38 L247.07 136.38 M250.33 128.39 L248.55 133.13 M249.44 131.65 L254.91 131.65 L254.62 141.86 L252.84 141.27 M250.03 135.20 L251.66 137.57 M257.74 132.24 L261.74 132.24 M259.66 128.39 L259.66 141.71 L258.48 141.12 M257.74 138.16 L261.74 135.79 M264.40 128.39 L264.40 132.98 L271.21 132.98 L271.21 132.09 M270.62 129.13 L264.40 131.35 M264.40 135.20 L270.32 135.20 L270.32 142.01 L264.40 142.01 L264.40 135.20 M264.40 138.60 L270.32 138.60 M275.96 128.39 L273.59 133.13 M274.33 131.65 L278.18 131.65 M274.03 135.20 L278.18 135.20 M276.11 131.65 L276.11 141.12 L278.47 139.64 M279.66 133.72 L287.06 133.72 M283.36 128.39 L283.36 142.30 M291.07 139.34 L291.66 140.82 L290.33 142.60 M306.03 129.87 L317.87 129.87 M306.92 132.54 L316.98 132.54 M305.14 135.20 L318.76 135.20 M311.95 128.10 L311.95 135.20 M310.77 135.20 L305.73 140.53 M308.40 138.75 L308.40 142.01 L311.95 140.53 M311.95 135.20 L314.91 139.05 L318.76 142.01 M313.43 137.57 L317.28 136.09 M323.36 130.02 L332.24 130.02 M320.99 133.72 L334.61 133.72 M327.80 133.72 L327.80 141.86 L326.32 141.27 M324.84 136.68 L321.88 140.53 M330.76 136.68 L333.72 140.53 M339.21 128.39 L348.09 128.39 L348.09 132.83 L339.21 132.83 L339.21 128.39 M339.21 130.61 L348.09 130.61 M336.84 134.61 L350.46 134.61 M337.58 136.09 L343.06 136.09 M338.91 136.09 L338.91 141.86 M341.87 136.09 L341.87 142.30 M338.91 138.31 L341.87 138.31 M338.91 140.23 L341.87 140.23 M337.29 142.01 L343.06 141.12 M344.24 136.53 L349.57 136.53 L345.13 142.01 M345.72 138.31 L350.46 142.30 M355.50 128.39 L353.28 137.42 L358.32 142.01 M352.69 132.98 L358.61 132.98 L356.54 138.46 L353.14 142.01 M360.09 129.87 L365.42 129.87 L362.90 132.98 M362.90 132.98 L362.90 141.86 L361.57 141.27 M359.20 135.35 L366.60 135.35 M371.35 128.39 L370.17 131.06 M369.13 131.65 L373.87 131.65 L373.87 141.12 L369.13 141.12 L369.13 131.65 M369.13 136.38 L373.87 136.38 M377.13 128.39 L375.35 133.13 M376.24 131.65 L381.71 131.65 L381.42 141.86 L379.64 141.27 M376.83 135.20 L378.46 137.57 M385.28 129.28 L385.28 138.16 L384.24 142.30 M385.28 129.28 L389.72 129.28 L389.72 141.86 L388.83 141.56 M385.28 133.72 L389.72 133.72 M385.28 137.42 L389.72 137.42 M392.68 129.28 L392.68 138.16 L391.50 142.30 M392.68 129.28 L397.86 129.28 L397.86 141.86 L396.82 141.56 M392.68 133.72 L397.86 133.72 M392.68 137.42 L397.86 137.42 M400.24 132.24 L413.86 132.24 M406.46 128.39 L404.98 136.68 L400.69 142.30 M406.16 135.94 L412.38 135.94 L406.16 142.30 M407.94 137.57 L413.86 142.30" fill="none" stroke="#218a21" stroke-width="1.75" stroke-linecap="round" stroke-linejoin="round"/></svg>
</div>
</body></html>
